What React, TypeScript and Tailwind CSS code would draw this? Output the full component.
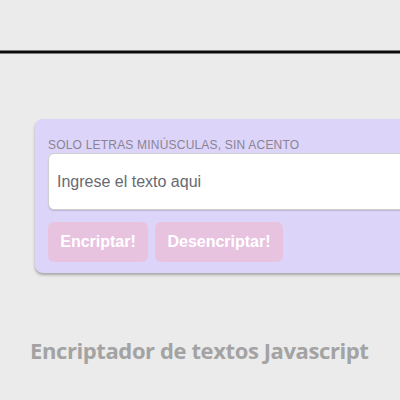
export default function App() {
  return (
    <div className="w-[400px] h-[400px] bg-[#ebebeb] overflow-hidden flex flex-col" style={{ fontFamily: "Arial, 'Liberation Sans', sans-serif" }}>
      <div className="mt-[50px] h-[4px] bg-[#7a7a7a] flex flex-col justify-center">
        <div className="h-[2px] bg-[#0a0a0a]" />
      </div>
      <div className="ml-[35px] mt-[65px] w-[400px] h-[154px] bg-[#ddd4f9] rounded-[8px] shadow-[0_2px_3px_rgba(0,0,0,0.3)] pl-[13px] pt-[20px] flex flex-col">
        <div className="text-[12px] leading-[12px] text-[#8a8494] tracking-[0.2px] uppercase" style={{ fontFamily: "'Liberation Sans', Arial, sans-serif" }}>
          Solo letras minúsculas, sin acento
        </div>
        <div className="mt-[2px] h-[57px] bg-white rounded-[6px] border border-[#cfcfcf] shadow-[0_1px_1px_rgba(0,0,0,0.15)] flex items-center pl-[8px]">
          <span className="text-[16px] text-[#666a70]">Ingrese el texto aqui</span>
        </div>
        <div className="mt-[12px] flex gap-[7px]">
          <div className="w-[100px] h-[40px] rounded-[6px] bg-[#e8c3e0] text-white font-bold text-[16px] flex items-center justify-center">Encriptar!</div>
          <div className="w-[128px] h-[40px] rounded-[6px] bg-[#e8c3e0] text-white font-bold text-[16px] flex items-center justify-center">Desencriptar!</div>
        </div>
      </div>
      <div className="mt-[63px] ml-[30px] text-[22px] font-bold text-[#a3a3a3] leading-[28px] tracking-[-0.4px]" style={{ fontFamily: "'Open Sans', sans-serif" }}>
        Encriptador de textos Javascript
      </div>
    </div>
  );
}
